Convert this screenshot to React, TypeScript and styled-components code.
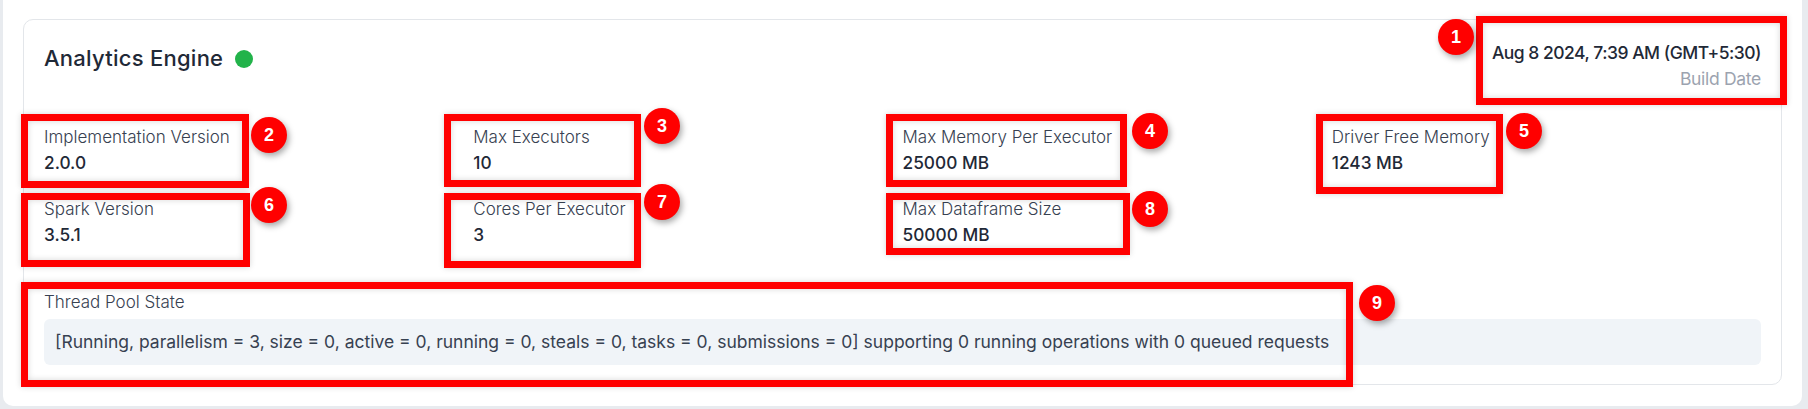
import React from "react";
import styled, { createGlobalStyle } from "styled-components";

const GlobalStyle = createGlobalStyle`
  html, body { margin: 0; padding: 0; }
  body {
    background: #e8ebef;
    font-family: Inter, "Noto Sans", "Liberation Sans", sans-serif;
    color: #1f2937;
  }
  * { box-sizing: border-box; }
`;

const Stage = styled.div`
  position: relative;
  width: 1808px;
  height: 409px;
  overflow: hidden;
`;

const Panel = styled.div`
  margin: 0 6px 3px 3px;
  background: #ffffff;
  border-radius: 0 0 10px 10px;
  padding: 19px 20px 21px;
`;

const Card = styled.section`
  border: 1px solid #e3e6ea;
  border-radius: 10px;
  padding: 20px 20px 19px;
`;

const Header = styled.header`
  display: flex;
  justify-content: space-between;
  align-items: flex-start;
`;

const TitleRow = styled.div`
  display: flex;
  align-items: center;
  gap: 12px;
`;

const Title = styled.h2`
  margin: 0;
  font-size: 22px;
  font-weight: 500;
  line-height: 36px;
  letter-spacing: 0.25px;
  color: #1f2937;
`;

const StatusDot = styled.span`
  width: 18px;
  height: 18px;
  border-radius: 50%;
  background: #22b34a;
  margin-top: 2px;
`;

const BuildInfo = styled.div`
  text-align: right;
  font-size: 17.5px;
  line-height: 26px;
`;

const BuildDate = styled.div`
  font-weight: 500;
  letter-spacing: -0.5px;
  color: #1f2937;
`;

const BuildLabel = styled.div`
  font-weight: 400;
  letter-spacing: -0.3px;
  color: #9ca3af;
`;

const Grid = styled.div`
  display: grid;
  grid-template-columns: repeat(4, 1fr);
  row-gap: 20px;
  margin-top: 32px;
`;

const Field = styled.div`
  display: flex;
  flex-direction: column;
`;

const Label = styled.div`
  font-size: 17px;
  font-weight: 300;
  line-height: 26px;
  color: #374151;
`;

const Value = styled.div`
  font-size: 17.3px;
  font-weight: 500;
  line-height: 26px;
  color: #1f2937;
`;

const ThreadSection = styled.div`
  margin-top: 41px;
`;

const ThreadBox = styled.div`
  margin-top: 4px;
  background: #f0f4f8;
  border-radius: 6px;
  padding: 10px 11px;
  font-size: 17.5px;
  line-height: 26px;
  font-weight: 400;
  color: #374151;
`;

const AnnotationLayer = styled.div`
  position: absolute;
  inset: 0;
  pointer-events: none;
`;

const AnnotationBox = styled.div<{ $x: number; $y: number; $w: number; $h: number }>`
  position: absolute;
  left: ${(p) => p.$x}px;
  top: ${(p) => p.$y}px;
  width: ${(p) => p.$w}px;
  height: ${(p) => p.$h}px;
  border: 7px solid #ff0000;
  box-shadow: 0 0 6px rgba(0, 0, 0, 0.16), inset 0 0 6px rgba(0, 0, 0, 0.16);
`;

const Badge = styled.div<{ $cx: number; $cy: number }>`
  position: absolute;
  left: ${(p) => p.$cx - 18}px;
  top: ${(p) => p.$cy - 18}px;
  width: 36px;
  height: 36px;
  border-radius: 50%;
  background: #ff0000;
  color: #ffffff;
  display: flex;
  align-items: center;
  justify-content: center;
  font-family: "Liberation Sans", Arial, sans-serif;
  font-weight: 700;
  font-size: 18px;
  box-shadow: 2px 3px 6px rgba(0, 0, 0, 0.35);
`;

const fields = [
  { label: "Implementation Version", value: "2.0.0" },
  { label: "Max Executors", value: "10" },
  { label: "Max Memory Per Executor", value: "25000 MB" },
  { label: "Driver Free Memory", value: "1243 MB" },
  { label: "Spark Version", value: "3.5.1" },
  { label: "Cores Per Executor", value: "3" },
  { label: "Max Dataframe Size", value: "50000 MB" },
];

const boxes = [
  { x: 1476, y: 16, w: 311, h: 89 },
  { x: 21, y: 114, w: 228, h: 74 },
  { x: 444, y: 114, w: 197, h: 73 },
  { x: 886, y: 114, w: 241, h: 73 },
  { x: 1316, y: 114, w: 187, h: 80 },
  { x: 21, y: 193, w: 229, h: 74 },
  { x: 444, y: 193, w: 197, h: 75 },
  { x: 886, y: 193, w: 244, h: 62 },
  { x: 21, y: 282, w: 1332, h: 105 },
];

const badges = [
  { n: 1, cx: 1456, cy: 37 },
  { n: 2, cx: 269, cy: 135 },
  { n: 3, cx: 662, cy: 126 },
  { n: 4, cx: 1150, cy: 131 },
  { n: 5, cx: 1524, cy: 131 },
  { n: 6, cx: 269, cy: 205 },
  { n: 7, cx: 662, cy: 202 },
  { n: 8, cx: 1150, cy: 209 },
  { n: 9, cx: 1377, cy: 303 },
];

export default function App() {
  return (
    <>
      <GlobalStyle />
      <Stage>
        <Panel>
          <Card>
            <Header>
              <TitleRow>
                <Title>Analytics Engine</Title>
                <StatusDot />
              </TitleRow>
              <BuildInfo>
                <BuildDate>Aug 8 2024, 7:39 AM (GMT+5:30)</BuildDate>
                <BuildLabel>Build Date</BuildLabel>
              </BuildInfo>
            </Header>
            <Grid>
              {fields.map((f) => (
                <Field key={f.label}>
                  <Label>{f.label}</Label>
                  <Value>{f.value}</Value>
                </Field>
              ))}
            </Grid>
            <ThreadSection>
              <Label>Thread Pool State</Label>
              <ThreadBox>
                [Running, parallelism = 3, size = 0, active = 0, running = 0, steals = 0, tasks = 0,
                submissions = 0] supporting 0 running operations with 0 queued requests
              </ThreadBox>
            </ThreadSection>
          </Card>
        </Panel>
        <AnnotationLayer>
          {boxes.map((b, i) => (
            <AnnotationBox key={i} $x={b.x} $y={b.y} $w={b.w} $h={b.h} />
          ))}
          {badges.map((b) => (
            <Badge key={b.n} $cx={b.cx} $cy={b.cy}>
              {b.n}
            </Badge>
          ))}
        </AnnotationLayer>
      </Stage>
    </>
  );
}
